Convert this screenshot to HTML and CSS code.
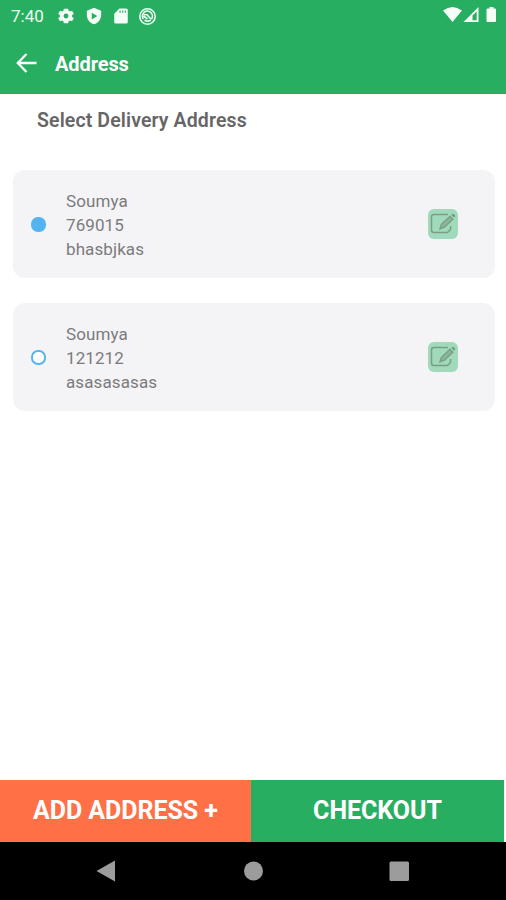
FILE: index.html
```html
<!DOCTYPE html>
<html lang="en">
<head>
<meta charset="utf-8">
<title>Address</title>
<link rel="stylesheet" href="styles.css">
</head>
<body>
<div class="screen">
  <header class="top">
    <div class="status">
      <span class="time">7:40</span>
      <svg class="gear" width="18" height="18" viewBox="1 1 22 22"><path fill-rule="evenodd" d="M19.400 13a7.500 7.500 0 0 0 0-2l2.200-1.700-2.200-3.700-2.600 1a7.500 7.500 0 0 0-1.700-1L14.700 3H9.300l-.4 2.600a7.500 7.500 0 0 0-1.700 1l-2.600-1-2.200 3.700L4.600 11a7.500 7.500 0 0 0 0 2l-2.200 1.700 2.200 3.700 2.600-1a7.500 7.500 0 0 0 1.700 1l.4 2.600h5.400l.4-2.600a7.500 7.500 0 0 0 1.700-1l2.600 1 2.200-3.700zM12 15a3 3 0 1 1 0-6 3 3 0 0 1 0 6z"/></svg>
      <svg class="shield" width="18" height="18" viewBox="0 0 24 24"><path fill-rule="evenodd" d="M12 1 2.500 5v6c0 5.500 4 10.500 9.500 12 5.500-1.500 9.500-6.500 9.500-12V5zM9 7.500l7.500 4.500L9 16.500z"/></svg>
      <svg class="sd" width="18" height="18" viewBox="0 0 24 24"><path fill-rule="evenodd" d="M19 2h-9L3 9v11q0 2 2 2h14q2 0 2-2V4q0-2-2-2zM10 4.500h1.500v3H10zm3.500 0H15v3h-1.500zm3.500 0h1.500v3H17z"/></svg>
      <svg class="target" width="19" height="19" viewBox="0 0 19 19"><circle cx="9.500" cy="9.500" r="7.700"/><path d="M5.300 12a5 5 0 1 1 8 .2M5.500 7.500l3.500.2 3.800 4.300M6.500 13.300q3 1.800 6.300 0M5.500 9l4 3"/></svg>
      <svg class="signals" width="56" height="20" viewBox="0 0 56 20"><path d="M0 5.500q9.500-7 19 0L9.500 17z"/><path fill-rule="evenodd" d="M20.500 17 35.500 2v15zM29.500 10.500v4.700h4.200V6.500z"/><path d="M46.500 2h4v1.500H52q1 0 1 1V16q0 1-1 1h-7.500q-1 0-1-1V4.500q0-1 1-1h2z"/></svg>
    </div>
    <div class="bar">
      <svg class="back" width="22" height="20" viewBox="0 0 22 20"><path d="M20.500 10H2M10.500 1 1.800 10l8.700 9"/></svg>
      <h1>Address</h1>
    </div>
  </header>
  <main>
    <h2>Select Delivery Address</h2>
    <section class="card">
      <span class="radio selected"></span>
      <div class="lines"><div>Soumya</div><div>769015</div><div>bhasbjkas</div></div>
      <svg class="edit" width="30" height="30" viewBox="0 0 30 30"><path class="frame" d="M20 5.500H6Q3.500 5.500 3.500 8v13q0 2.500 2.500 2.500h13.500l3-3V17"/><path class="pencil" d="m12 19.800 1.500-4.500L22 7.300l2.800 2.900-8.300 8z"/><path class="tip" d="m23.500 6 1.500-1.500 2.500 2.500L26 8.500z"/></svg>
    </section>
    <section class="card">
      <span class="radio"></span>
      <div class="lines"><div>Soumya</div><div>121212</div><div>asasasasas</div></div>
      <svg class="edit" width="30" height="30" viewBox="0 0 30 30"><path class="frame" d="M20 5.500H6Q3.500 5.500 3.500 8v13q0 2.500 2.500 2.500h13.500l3-3V17"/><path class="pencil" d="m12 19.800 1.500-4.500L22 7.300l2.800 2.900-8.300 8z"/><path class="tip" d="m23.500 6 1.500-1.500 2.500 2.500L26 8.500z"/></svg>
    </section>
  </main>
  <div class="actions">
    <button class="add">ADD ADDRESS +</button>
    <button class="checkout">CHECKOUT</button>
  </div>
  <nav class="nav">
    <svg width="506" height="58" viewBox="0 0 506 58"><path d="M96.500 29 115 18.500v21z"/><circle cx="253.500" cy="29" r="9.500"/><rect x="389.500" y="19.500" width="19.500" height="19.500" rx="1.500"/></svg>
  </nav>
</div>
</body>
</html>
```
FILE: styles.css
```css
* { box-sizing: border-box; }
body { margin: 0; font-family: Roboto, "Liberation Sans", sans-serif; background: #fff; }
svg { display: block; flex: none; }
h1, h2 { margin: 0; white-space: nowrap; }
.screen { width: 506px; height: 900px; display: flex; flex-direction: column; overflow: hidden; }
.top { height: 94px; background: #27ae60; color: #fff; }
.status { height: 32px; display: flex; align-items: center; padding: 0 7px 0 11px; fill: #f5fff7; }
.time { width: 46px; font-size: 17px; line-height: 32px; color: #f0fbf2; }
.gear { margin-right: 10px; }
.shield { margin-right: 9px; }
.sd { margin-right: 8px; }
.target { fill: none; stroke: #f0fbf2; stroke-width: 1.6; }
.signals { margin-left: auto; margin-bottom: 2px; }
.bar { height: 62px; display: flex; align-items: center; padding-left: 16px; }
.back { fill: none; stroke: #fff; stroke-width: 2.3; margin-right: 17px; }
h1 { font-size: 20px; font-weight: 700; line-height: 62px; letter-spacing: -0.1px; padding-top: 2px; }
main { flex: 1; padding: 0 11px 0 13px; }
h2 { height: 76px; padding: 14px 0 0 24px; font-size: 19.500px; line-height: 26px; font-weight: 600; letter-spacing: 0.12px; color: #666; }
.card { height: 108px; margin-bottom: 25px; padding: 0 37px 0 18px; display: flex; align-items: center; border-radius: 12px; background: #f4f4f7; }
.radio { width: 15px; height: 15px; margin-right: 20px; border: 2px solid #54b4f0; border-radius: 7px; background: #fff; }
.selected { background: #54b4f0; }
.lines { flex: 1; font-size: 17px; line-height: 24px; letter-spacing: 0.1px; color: #7b7b7d; padding-top: 1px; }
.edit { background: #a0dabb; border-radius: 6px; fill: none; stroke: #78a088; stroke-width: 1.5; }
.pencil { fill: #8cb69b; }
.tip { fill: #71977f; stroke: none; }
.actions { height: 62px; display: flex; padding-right: 2px; }
.actions button { border: 0; padding: 0; color: #fff; font: 700 25px/62px Roboto, sans-serif; letter-spacing: -0.05px; white-space: nowrap; }
.add { width: 251px; background: #ff7047; }
.checkout { flex: 1; background: #27ae60; }
.nav { height: 58px; background: #000; fill: #9c9c9c; }
```
